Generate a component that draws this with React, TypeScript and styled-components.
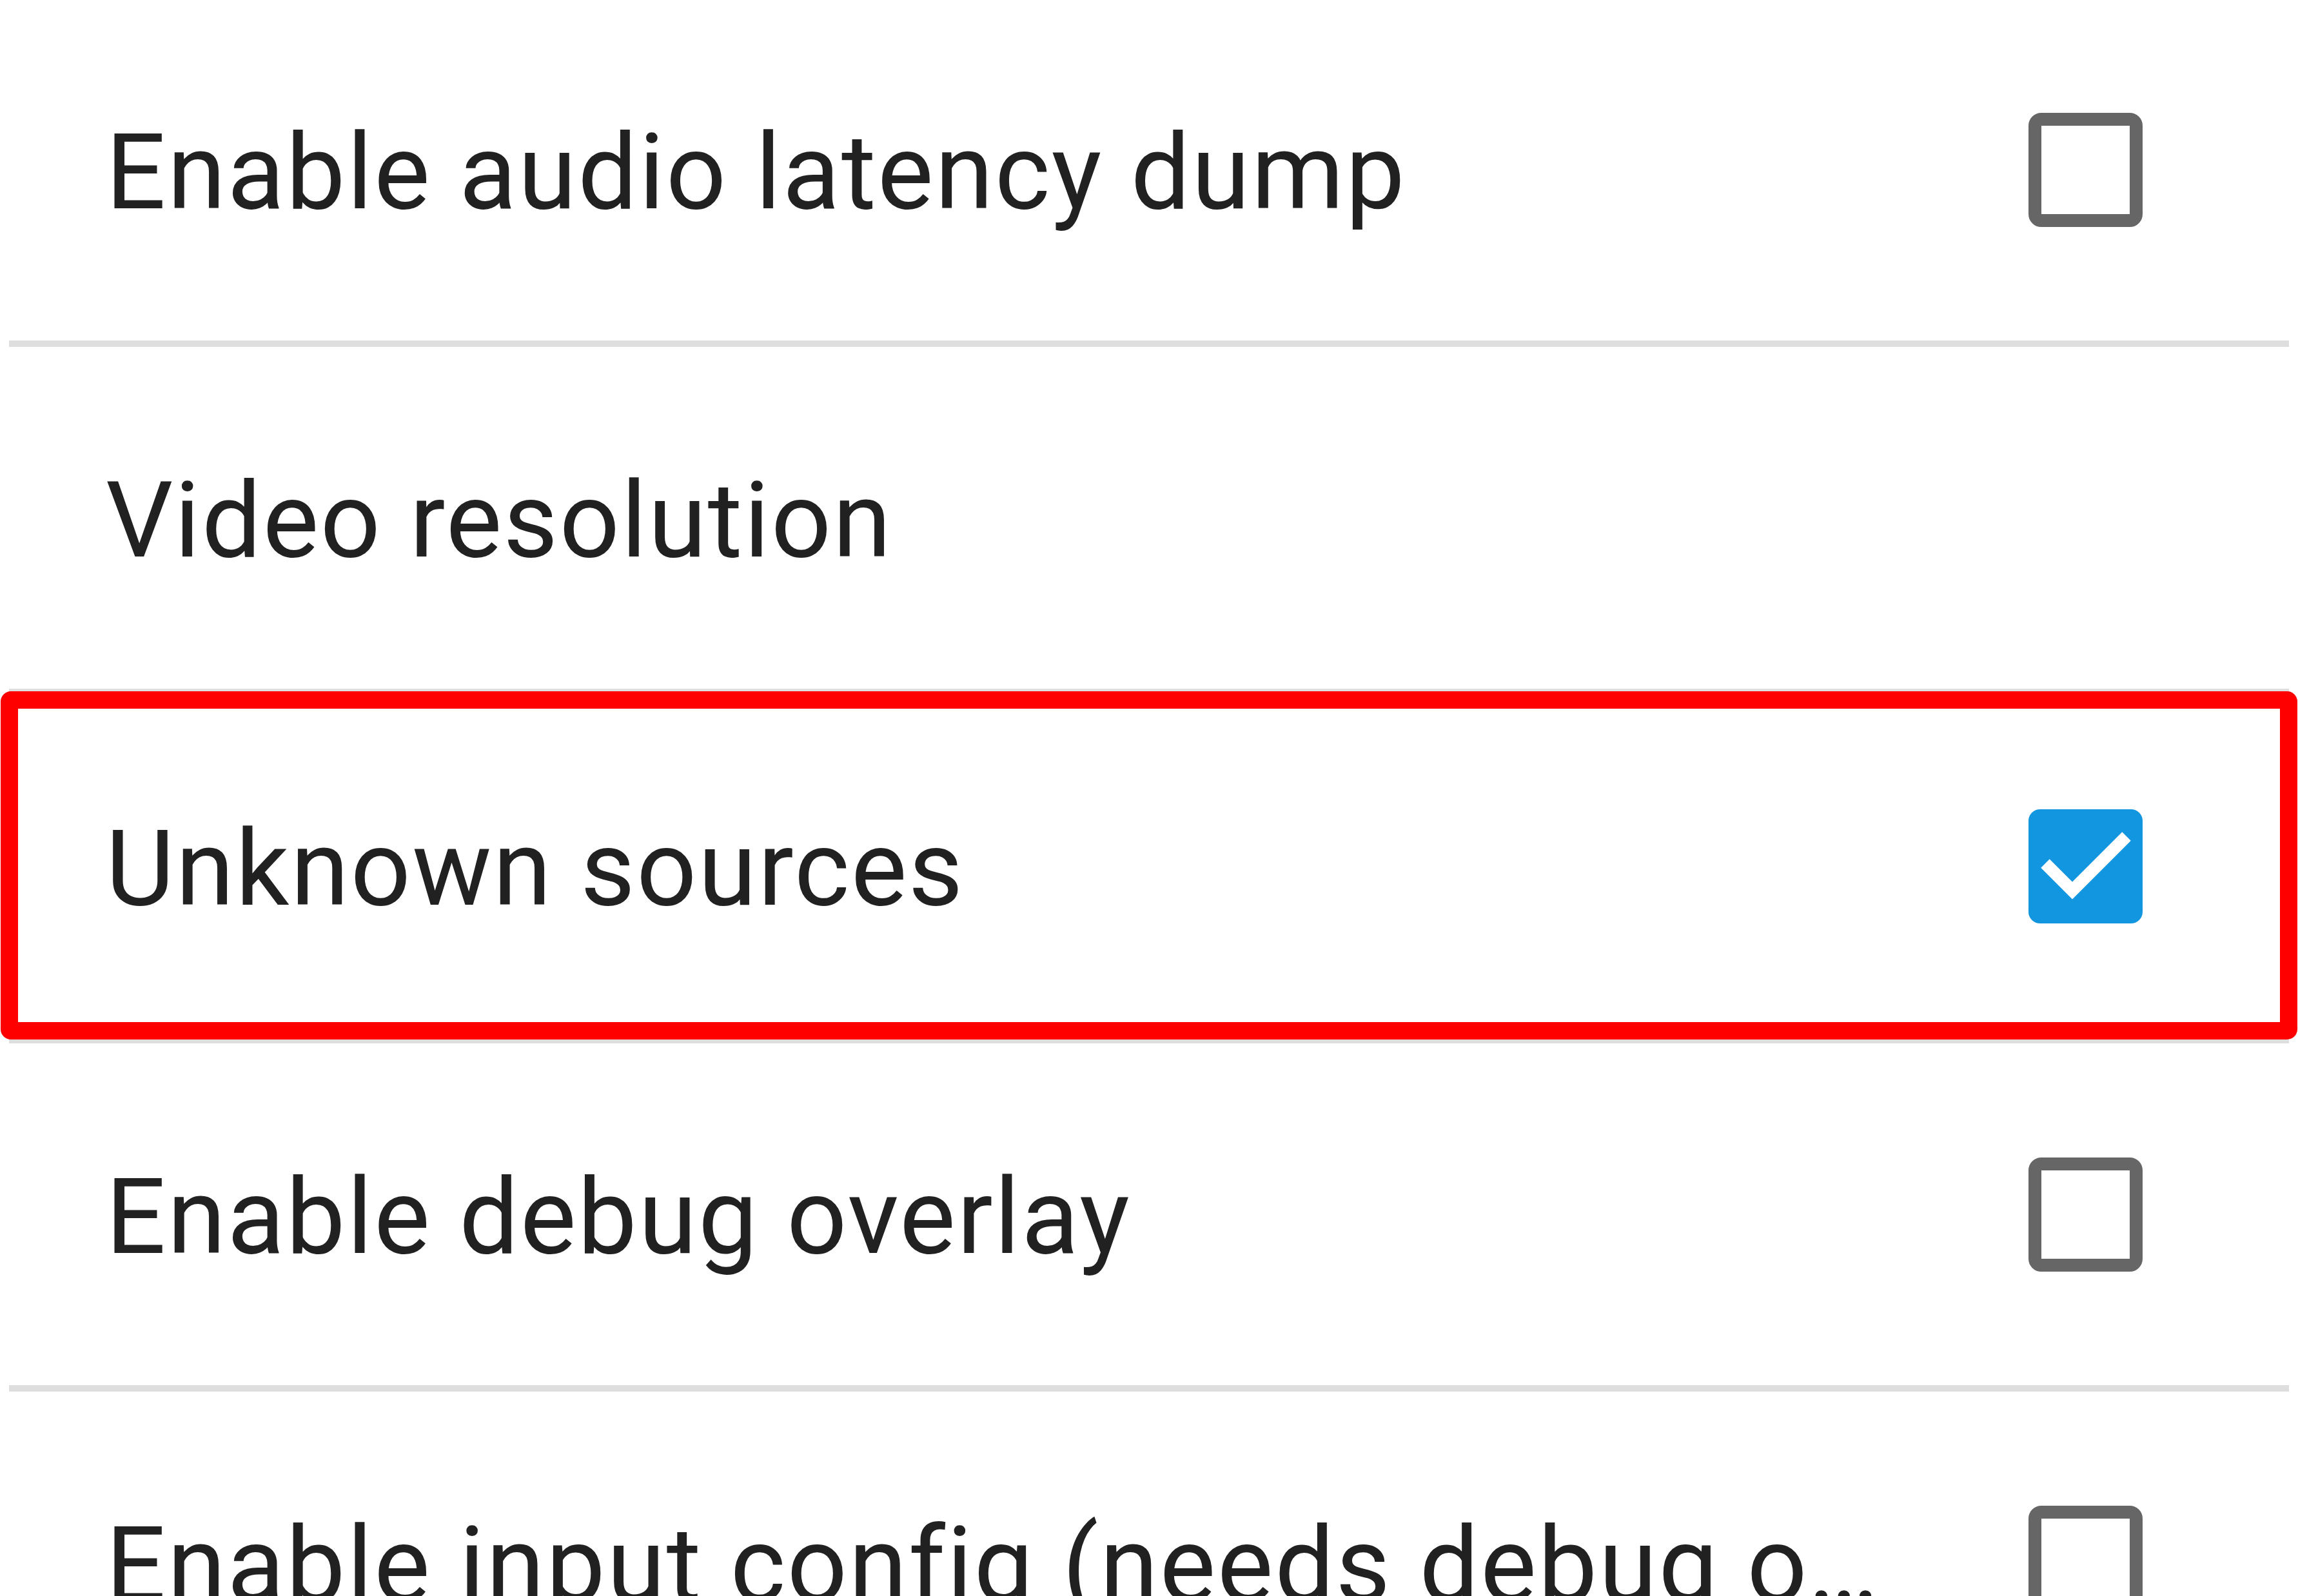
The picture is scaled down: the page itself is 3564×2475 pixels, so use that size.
import React from 'react';
import styled, { createGlobalStyle } from 'styled-components';

const GlobalStyle = createGlobalStyle`
  html, body {
    margin: 0;
    padding: 0;
    background: #ffffff;
  }

  body {
    font-family: Roboto, "Noto Sans", "Liberation Sans", sans-serif;
    color: #212121;
  }
`;

const Screen = styled.div`
  width: 3564px;
  height: 2475px;
  overflow: hidden;
  background: #ffffff;
`;

const PrefList = styled.div`
  display: flex;
  flex-direction: column;
  margin-top: -2px;
`;

const PrefRow = styled.div<{ $highlighted?: boolean }>`
  position: relative;
  display: flex;
  align-items: center;
  gap: 200px;
  height: 530px;
  flex-shrink: 0;
  padding: 0 241px 0 164px;
  box-sizing: border-box;

  ${props => props.$highlighted ? `
    &::after {
      content: '';
      position: absolute;
      top: -6px;
      bottom: -4px;
      left: 1px;
      right: 1px;
      border: 27px solid #ff0000;
      border-radius: 16px;
      pointer-events: none;
    }
  ` : ''}
`;

const Label = styled.div`
  flex: 1;
  min-width: 0;
  font-size: 164px;
  line-height: 1.35;
  letter-spacing: 2.2px;
  padding-top: 10px;
  white-space: nowrap;
  overflow: hidden;
  text-overflow: ellipsis;
`;

const Box = styled.div<{ $checked?: boolean }>`
  width: 177px;
  height: 177px;
  flex-shrink: 0;
  box-sizing: border-box;
  border-radius: 18px;
  display: flex;
  align-items: center;
  justify-content: center;

  ${props => props.$checked ? `
    background: #1296e0;
  ` : `
    border: 20px solid #666666;
    border-radius: 20px;
  `}
`;

const Divider = styled.div`
  height: 10px;
  flex-shrink: 0;
  margin: 0 14px;
  background: #dedede;
`;

const Checkbox: React.FC<{ checked?: boolean }> = ({ checked }) => (
  <Box $checked={checked}>
    {checked && (
      <svg width="177" height="177" viewBox="0 0 177 177">
        <polyline
          points="26,84 68,126 152,42"
          fill="none"
          stroke="#ffffff"
          strokeWidth="19"
        />
      </svg>
    )}
  </Box>
);

type Pref = {
  title: string;
  kind: 'check' | 'plain';
  checked?: boolean;
  highlighted?: boolean;
  divider?: boolean;
};

const prefs: Pref[] = [
  { title: 'Enable audio latency dump', kind: 'check', divider: true },
  { title: 'Video resolution', kind: 'plain', divider: true },
  { title: 'Unknown sources', kind: 'check', checked: true, highlighted: true, divider: true },
  { title: 'Enable debug overlay', kind: 'check', divider: true },
  { title: 'Enable input config (needs debug overlay)', kind: 'check' },
];

const App: React.FC = () => {
  return (
    <>
      <GlobalStyle />
      <Screen>
        <PrefList>
          {prefs.map(pref => (
            <React.Fragment key={pref.title}>
              <PrefRow $highlighted={pref.highlighted}>
                <Label>{pref.title}</Label>
                {pref.kind === 'check' && <Checkbox checked={pref.checked} />}
              </PrefRow>
              {pref.divider && <Divider />}
            </React.Fragment>
          ))}
        </PrefList>
      </Screen>
    </>
  );
};

export default App;
